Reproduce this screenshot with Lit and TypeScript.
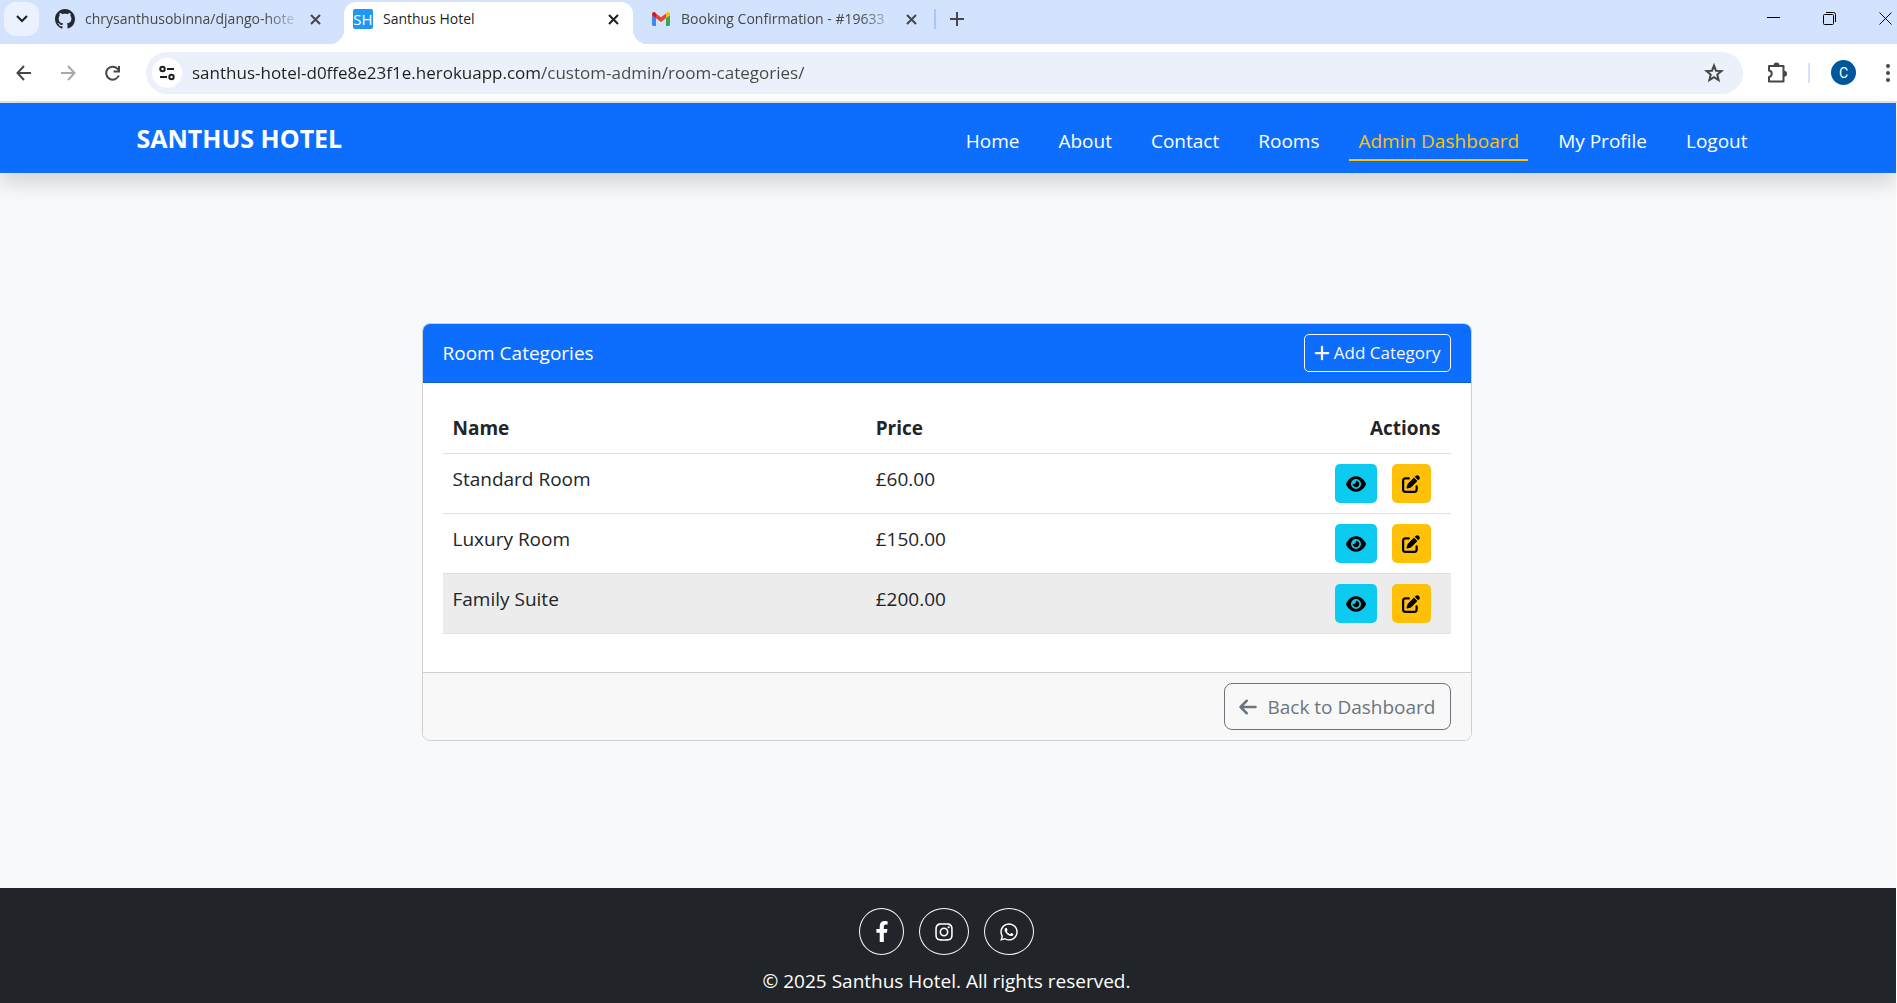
import { LitElement, html, css, svg } from "lit";
import { customElement, property, state } from "lit/decorators.js";
import { classMap } from "lit/directives/class-map.js";

const FONT = css`"Segoe UI", "Open Sans", "Noto Sans", sans-serif`;

const icon = (path: string, box: string, width: number, height: number) =>
  html`<svg viewBox=${box} width=${width} height=${height} fill="currentColor" aria-hidden="true"><path d=${path}></path></svg>`;

const line = (body: unknown, size: number, stroke = 2) =>
  html`<svg viewBox="0 0 ${size} ${size}" width=${size} height=${size} fill="none" stroke="currentColor"
    stroke-width=${stroke} aria-hidden="true">${body}</svg>`;

const EYE =
  "M288 32c-80.8 0-145.5 36.8-192.6 80.6C48.6 156 17.3 208 2.5 243.7c-3.3 7.9-3.3 16.7 0 24.6C17.3 304 48.6 356 95.4 399.4C142.5 443.2 207.2 480 288 480s145.5-36.8 192.6-80.6c46.8-43.5 78.1-95.4 93-131.1c3.3-7.9 3.3-16.7 0-24.6c-14.9-35.7-46.2-87.7-93-131.1C433.5 68.8 368.8 32 288 32zM144 256a144 144 0 1 1 288 0 144 144 0 1 1 -288 0zm144-64c0 35.3-28.7 64-64 64c-7.1 0-13.9-1.2-20.3-3.3c-5.5-1.8-11.9 1.6-11.7 7.4c.3 6.9 1.3 13.8 3.2 20.7c13.7 51.2 66.4 81.6 117.6 67.9s81.6-66.4 67.9-117.6c-11.1-41.5-47.8-69.4-88.6-71.1c-5.8-.2-9.2 6.1-7.4 11.7c2.1 6.4 3.3 13.2 3.3 20.3z";
const EDIT =
  "M471.6 21.7c-21.9-21.9-57.3-21.9-79.2 0L362.3 51.7l97.9 97.9 30.1-30.1c21.9-21.9 21.9-57.3 0-79.2L471.6 21.7zm-299.2 220c-6.1 6.1-10.8 13.6-13.5 21.9l-29.6 88.8c-2.9 8.6-.6 18.1 5.8 24.6s15.9 8.7 24.6 5.8l88.8-29.6c8.2-2.7 15.7-7.4 21.9-13.5L437.7 172.3 339.7 74.3 172.4 241.7zM96 64C43 64 0 107 0 160V416c0 53 43 96 96 96H352c53 0 96-43 96-96V320c0-17.7-14.3-32-32-32s-32 14.3-32 32v96c0 17.7-14.3 32-32 32H96c-17.7 0-32-14.3-32-32V160c0-17.7 14.3-32 32-32h96c17.7 0 32-14.3 32-32s-14.3-32-32-32H96z";
const PLUS =
  "M256 80c0-17.7-14.3-32-32-32s-32 14.3-32 32V224H48c-17.7 0-32 14.3-32 32s14.3 32 32 32H192V432c0 17.7 14.3 32 32 32s32-14.3 32-32V288H400c17.7 0 32-14.3 32-32s-14.3-32-32-32H256V80z";
const ARROW_LEFT =
  "M9.4 233.4c-12.5 12.5-12.5 32.8 0 45.3l160 160c12.5 12.5 32.8 12.5 45.3 0s12.5-32.8 0-45.3L109.2 288 416 288c17.7 0 32-14.3 32-32s-14.3-32-32-32l-306.7 0L214.6 118.6c12.5-12.5 12.5-32.8 0-45.3s-32.8-12.5-45.3 0l-160 160z";
const FACEBOOK =
  "M279.14 288l14.22-92.66h-88.91v-60.13c0-25.35 12.42-50.06 52.24-50.06h40.42V6.26S260.43 0 225.36 0c-73.22 0-121.08 44.38-121.08 124.72v70.62H22.89V288h81.39v224h100.17V288z";
const INSTAGRAM =
  "M224.1 141c-63.6 0-114.9 51.3-114.9 114.9s51.3 114.9 114.9 114.9S339 319.5 339 255.9 287.7 141 224.1 141zm0 189.6c-41.1 0-74.7-33.5-74.7-74.7s33.5-74.7 74.7-74.7 74.7 33.5 74.7 74.7-33.6 74.7-74.7 74.7zm146.4-194.3c0 14.9-12 26.8-26.8 26.8-14.9 0-26.8-12-26.8-26.8s12-26.8 26.8-26.8 26.8 12 26.8 26.8zm76.1 27.2c-1.7-35.9-9.9-67.7-36.2-93.9-26.2-26.2-58-34.4-93.9-36.2-37-2.1-147.9-2.1-184.9 0-35.8 1.7-67.6 9.9-93.9 36.1s-34.4 58-36.2 93.9c-2.1 37-2.1 147.9 0 184.9 1.7 35.9 9.9 67.7 36.2 93.9s58 34.4 93.9 36.2c37 2.1 147.9 2.1 184.9 0 35.9-1.7 67.7-9.9 93.9-36.2 26.2-26.2 34.4-58 36.2-93.9 2.1-37 2.1-147.8 0-184.8zM398.8 388c-7.8 19.6-22.9 34.7-42.6 42.6-29.5 11.7-99.5 9-132.1 9s-102.7 2.6-132.1-9c-19.6-7.8-34.7-22.9-42.6-42.6-11.7-29.5-9-99.5-9-132.1s-2.6-102.7 9-132.1c7.8-19.6 22.9-34.7 42.6-42.6 29.5-11.7 99.5-9 132.1-9s102.7-2.6 132.1 9c19.6 7.8 34.7 22.9 42.6 42.6 11.7 29.5 9 99.5 9 132.1s2.7 102.7-9 132.1z";
const WHATSAPP =
  "M380.9 97.1C339 55.1 283.2 32 223.9 32c-122.4 0-222 99.6-222 222 0 39.1 10.2 77.3 29.6 111L0 480l117.7-30.9c32.4 17.7 68.9 27 106.1 27h.1c122.3 0 224.1-99.6 224.1-222 0-59.3-25.2-115-67.1-157zm-157 341.6c-33.2 0-65.7-8.9-94-25.7l-6.7-4-69.8 18.3L72 359.2l-4.4-7c-18.5-29.4-28.2-63.3-28.2-98.2 0-101.7 82.8-184.5 184.6-184.5 49.3 0 95.6 19.2 130.4 54.1 34.8 34.9 56.2 81.2 56.1 130.5 0 101.8-84.9 184.6-186.6 184.6zm101.2-138.2c-5.5-2.8-32.8-16.2-37.9-18-5.1-1.9-8.8-2.8-12.5 2.8-3.7 5.6-14.3 18-17.6 21.8-3.2 3.7-6.5 4.2-12 1.4-32.6-16.3-54-29.1-75.5-66-5.7-9.8 5.7-9.1 16.3-30.3 1.8-3.7.9-6.9-.5-9.7-1.4-2.8-12.5-30.1-17.1-41.2-4.5-10.8-9.1-9.3-12.5-9.5-3.2-.2-6.9-.2-10.6-.2-3.7 0-9.7 1.4-14.8 6.9-5.1 5.6-19.4 19-19.4 46.3 0 27.3 19.9 53.7 22.6 57.4 2.8 3.7 39.1 59.7 94.8 83.8 35.2 15.2 49 16.5 66.6 13.9 10.7-1.6 32.8-13.4 37.4-26.4 4.6-13 4.6-24.1 3.2-26.4-1.3-2.5-5-3.9-10.5-6.6z";
const GITHUB =
  "M8 0C3.58 0 0 3.58 0 8c0 3.54 2.29 6.53 5.47 7.59.4.07.55-.17.55-.38 0-.19-.01-.82-.01-1.49-2.01.37-2.53-.49-2.69-.94-.09-.23-.48-.94-.82-1.13-.28-.15-.68-.52-.01-.53.63-.01 1.08.58 1.23.82.72 1.21 1.87.87 2.33.66.07-.52.28-.87.51-1.07-1.78-.2-3.64-.89-3.64-3.95 0-.87.31-1.59.82-2.15-.08-.2-.36-1.02.08-2.12 0 0 .67-.21 2.2.82.64-.18 1.32-.27 2-.27s1.36.09 2 .27c1.53-1.04 2.2-.82 2.2-.82.44 1.1.16 1.92.08 2.12.51.56.82 1.27.82 2.15 0 3.07-1.87 3.75-3.65 3.95.29.25.54.73.54 1.48 0 1.07-.01 1.93-.01 2.2 0 .21.15.46.55.38A8.01 8.01 0 0 0 16 8c0-4.42-3.58-8-8-8z";

const gmail = html`<svg viewBox="0 0 20 20" width="20" height="20" aria-hidden="true">
  <path fill="#4285f4" d="M1 6v9.6c0 .8.6 1.4 1.4 1.4H5V9z"></path>
  <path fill="#34a853" d="M15 17h2.6c.8 0 1.4-.6 1.4-1.4V6l-4 3z"></path>
  <path fill="#fbbc04" d="M15 4.6v4.6l4-3V5c0-1.7-1.900-2.600-3.200-1.600z"></path>
  <path fill="#ea4335" d="M5 9.200V4.400l5 3.800 5-3.800v4.800l-5 3.800z"></path>
  <path fill="#c5221f" d="M1 5v1.200l4 3V4.400l-.8-1C2.900 2.400 1 3.300 1 5z"></path>
</svg>`;

@customElement("browser-chrome")
export class BrowserChrome extends LitElement {
  @property() url = "";

  static styles = css`
    :host { display: block; font-family: ${FONT}; color: #474747; background: #fff; }
    svg { display: block; flex: none; }
    button {
      display: flex; align-items: center; justify-content: center;
      padding: 0; border: 0; background: none; color: inherit; font: inherit; cursor: pointer; flex: none;
    }
    .strip { display: flex; height: 44px; background: #d3e2fd; overflow: hidden; }
    .search { width: 35px; height: 34px; margin: 2px 7px 0 4px; border-radius: 12px; background: #ebf1fe; color: #1f1f1f; }
    .tabs { display: flex; gap: 9px; }
    .tab {
      display: flex; align-items: center; box-sizing: border-box; width: 289px; height: 42px;
      margin-top: 2px; padding: 0 10px 8px 9px; font-size: 14px; line-height: 20px;
    }
    .tab.active { position: relative; background: #fff; border-radius: 12px 12px 0 0; color: #1f1f1f; }
    .tab.active::before, .tab.active::after {
      content: ""; position: absolute; bottom: 0; width: 14px; height: 14px;
    }
    .tab.active::before { right: 100%; background: radial-gradient(circle at 0 0, transparent 14px, #fff 14px); }
    .tab.active::after { left: 100%; background: radial-gradient(circle at 100% 0, transparent 14px, #fff 14px); }
    .title { flex: 1; min-width: 0; margin: 0 10px; white-space: nowrap; }
    .fade { -webkit-mask-image: linear-gradient(90deg, #000 180px, transparent 216px); mask-image: linear-gradient(90deg, #000 180px, transparent 216px); }
    .close { width: 20px; height: 20px; }
    .badge {
      width: 20px; height: 20px; border-radius: 2px; background: #2196f3; color: #fff;
      font-size: 15px; line-height: 20px; text-align: center; flex: none;
    }
    .github { color: #24292f; }
    .rule { width: 2px; height: 20px; background: #a8c7fa; margin: 9px 8px 0 3px; }
    .plus { width: 26px; height: 38px; }
    .window { display: flex; margin: 0 -16px 0 auto; color: #000; }
    .window button { width: 56px; height: 36px; }
    .bar { display: flex; align-items: center; height: 57px; box-sizing: border-box; padding: 0 3px 0 2px; }
    .nav { width: 44px; height: 40px; }
    .nav.off { color: #a9a9a9; }
    .address {
      flex: 1; display: flex; align-items: center; height: 42px; margin: 0 0 0 12px;
      border-radius: 21px; background: #ebf0fa; padding: 0 19px 0 6px;
    }
    .site { width: 30px; height: 30px; border-radius: 50%; background: #fff; color: #1f1f1f; }
    input {
      flex: 1; min-width: 0; height: 30px; margin: 0 10px; padding: 0; border: 0; outline: 0;
      font-family: inherit; font-size: 17px; color: transparent;
      background: linear-gradient(90deg, #1f1f1f 350px, #474747 350px); -webkit-background-clip: text; background-clip: text;
    }
    .ext { width: 40px; height: 40px; margin-left: 14px; }
    .split { width: 2px; height: 20px; margin: 0 21px 0 11px; background: #d3e2fd; }
    .avatar { width: 25px; height: 25px; border-radius: 50%; background: #00579b; color: #fff; font-family: Roboto, sans-serif; font-size: 14px; }
    .more { width: 12px; height: 40px; margin-left: 26px; }
    .edge { height: 2px; background: #dfe3e1; }
  `;

  private close() {
    return html`<button class="close" aria-label="Close tab">
      ${line(svg`<path d="M1 1l9 9M10 1l-9 9"></path>`, 11, 2)}
    </button>`;
  }

  render() {
    return html`
      <div class="strip">
        <button class="search" aria-label="Search tabs">${line(svg`<path d="M1 3l5 5 5-5"></path>`, 12, 2)}</button>
        <div class="tabs">
          <div class="tab">
            <span class="github">${icon(GITHUB, "0 0 16 16", 20, 20)}</span>
            <span class="title fade">chrysanthusobinna/django-hote</span>${this.close()}
          </div>
          <div class="tab active">
            <span class="badge">SH</span><span class="title">Santhus Hotel</span>${this.close()}
          </div>
          <div class="tab">
            ${gmail}<span class="title fade">Booking Confirmation - #19633</span>${this.close()}
          </div>
        </div>
        <span class="rule"></span>
        <button class="plus" aria-label="New tab">${line(svg`<path d="M7 0v14M0 7h14"></path>`, 14, 2)}</button>
        <div class="window">
          <button aria-label="Minimize">${line(svg`<path d="M0 5.500h13"></path>`, 13, 1)}</button>
          <button aria-label="Restore">
            ${line(svg`<rect x=".5" y="2.500" width="10" height="10" rx="1"></rect><path d="M3 .5h7.500a2 2 0 0 1 2 2V10"></path>`, 13, 1)}
          </button>
          <button aria-label="Close">${line(svg`<path d="M.5 .5l12 12M12.500 .5l-12 12"></path>`, 13, 1)}</button>
        </div>
      </div>
      <div class="bar">
        <button class="nav" aria-label="Back">${line(svg`<path d="M15 8H2M8 1L1.500 8 8 15"></path>`, 16, 2)}</button>
        <button class="nav off" aria-label="Forward">${line(svg`<path d="M1 8h13M8 1l6.500 7L8 15"></path>`, 16, 2)}</button>
        <button class="nav" aria-label="Reload">
          ${line(svg`<path d="M14.800 10.500A6.500 6.500 0 1 1 13.400 3.600L15 5.500"></path><path d="M15 1v5.500H9.500"></path>`, 16, 2)}
        </button>
        <div class="address">
          <button class="site" aria-label="View site information">
            ${line(svg`<circle cx="3.500" cy="4" r="2.200"></circle><path d="M8 4h7M1 12h7"></path><circle cx="12.500" cy="12" r="2.200"></circle>`, 16, 2)}
          </button>
          <input aria-label="Address" .value=${this.url} />
          <button aria-label="Bookmark this tab">
            ${line(svg`<path d="M10 2.600l2 5.100 5.500.4-4.200 3.500 1.300 5.400L10 14.100 5.400 17l1.300-5.400L2.500 8.100l5.500-.4z"></path>`, 20, 2)}
          </button>
        </div>
        <button class="ext" aria-label="Extensions">
          <svg viewBox="0 0 22 22" width="22" height="22" aria-hidden="true">
            <path d="M3 4h14.500v15.500H3v-4.500a3.300 3.300 0 0 0 0-6.500z" fill="none" stroke="currentColor" stroke-width="2" stroke-linejoin="round"></path>
            <path d="M7.500 3.500a3 3 0 0 1 6 0zM18 8.800a3 3 0 0 1 0 6z" fill="currentColor"></path>
          </svg>
        </button>
        <span class="split"></span>
        <button class="avatar" aria-label="Profile">C</button>
        <button class="more" aria-label="Menu">
          <svg viewBox="0 0 4 18" width="4" height="18" fill="currentColor" aria-hidden="true">
            <circle cx="2" cy="2" r="2"></circle><circle cx="2" cy="9" r="2"></circle><circle cx="2" cy="16" r="2"></circle>
          </svg>
        </button>
      </div>
      <div class="edge"></div>
    `;
  }
}

interface Category { name: string; price: string; }

@customElement("category-card")
export class CategoryCard extends LitElement {
  @property({ attribute: false }) rows: Category[] = [];
  @state() private current = 2;

  static styles = css`
    :host { display: block; font-family: ${FONT}; font-size: 19px; line-height: 30px; color: #212529; }
    svg { display: block; flex: none; }
    .card { border: 1px solid #cdcfd1; border-radius: 8px; background: #fff; overflow: hidden; }
    header {
      display: flex; align-items: center; justify-content: space-between;
      padding: 10px 20px; background: #0d6efd; color: #fff; border-bottom: 1px solid #0b5ed7;
    }
    h1 { margin: 0; font: inherit; }
    a { text-decoration: none; color: inherit; display: inline-flex; align-items: center; box-sizing: border-box; }
    .add { height: 38px; padding: 0 9px; gap: 4px; border: 1px solid #f8f9fa; border-radius: 5px; color: #f8f9fa; font-size: 17px; }
    .body { padding: 20px 20px 38px; }
    table { width: 100%; border-collapse: separate; border-spacing: 0; table-layout: fixed; }
    th, td { padding: 10px; border-bottom: 1px solid #dee2e6; vertical-align: top; text-align: left; }
    th { font-weight: 700; font-size: 19px; }
    .name { width: 40%; }
    .last { text-align: right; }
    .actions { display: flex; justify-content: flex-end; gap: 15px; padding-right: 10px; }
    .active td { background: #ececec; }
    .action { height: 39px; justify-content: center; border-radius: 5px; color: #000; }
    .view { width: 42px; background: #0dcaf0; }
    .edit { width: 39px; background: #ffc107; }
    footer { display: flex; justify-content: flex-end; padding: 10px 20px; background: #f8f8f8; border-top: 1px solid #cdcfd1; }
    .back { height: 47px; padding: 0 14px; gap: 10px; border: 1px solid #6c757d; border-radius: 8px; color: #6c757d; }
  `;

  render() {
    return html`
      <section class="card">
        <header>
          <h1>Room Categories</h1>
          <a class="add" href="#add">${icon(PLUS, "0 0 448 512", 16, 18)}Add Category</a>
        </header>
        <div class="body">
          <table>
            <thead>
              <tr><th class="name">Name</th><th>Price</th><th class="last">Actions</th></tr>
            </thead>
            <tbody>
              ${this.rows.map(
                (row, i) => html`
                  <tr class=${classMap({ active: i === this.current })} @mouseenter=${() => (this.current = i)}>
                    <td>${row.name}</td>
                    <td>${row.price}</td>
                    <td>
                      <div class="actions">
                        <a class="action view" href="#view" aria-label="View ${row.name}">${icon(EYE, "0 0 576 512", 20, 18)}</a>
                        <a class="action edit" href="#edit" aria-label="Edit ${row.name}">${icon(EDIT, "0 0 512 512", 18, 18)}</a>
                      </div>
                    </td>
                  </tr>
                `
              )}
            </tbody>
          </table>
        </div>
        <footer>
          <a class="back" href="#dashboard">${icon(ARROW_LEFT, "0 0 448 512", 18, 20)}Back to Dashboard</a>
        </footer>
      </section>
    `;
  }
}

@customElement("app-root")
export class AppRoot extends LitElement {
  private links = ["Home", "About", "Contact", "Rooms", "Admin Dashboard", "My Profile", "Logout"];
  private rows: Category[] = [
    { name: "Standard Room", price: "£60.00" },
    { name: "Luxury Room", price: "£150.00" },
    { name: "Family Suite", price: "£200.00" },
  ];

  static styles = css`
    :host {
      display: flex; flex-direction: column; min-height: 100vh; background: #fff;
      font-family: ${FONT}; font-size: 19px; line-height: 30px;
    }
    svg { display: block; }
    a { text-decoration: none; color: inherit; }
    .page { flex: 1; display: flex; flex-direction: column; margin-right: 1px; background: #f8f9fa; }
    .navbar { padding-right: 3px; background: #0d6efd; color: #fff; box-shadow: 0 10px 20px rgba(0, 0, 0, 0.15); }
    .container {
      display: flex; align-items: center; justify-content: space-between; box-sizing: border-box;
      height: 70px; max-width: 1650px; margin: 0 auto; padding: 0 15px;
    }
    .brand { font-size: 25px; font-weight: 700; }
    .links { display: flex; gap: 21px; }
    .link { padding: 11px 9px 3px; border-bottom: 2px solid transparent; }
    .link.on { color: #ffc107; border-color: #ffc107; }
    main { flex: 1; display: flex; align-items: center; justify-content: center; padding: 3px 3px 0 0; }
    category-card { flex: 0 1 1050px; }
    footer { padding: 20px 3px 7px 0; background: #212529; color: #fff; text-align: center; }
    .social { display: flex; justify-content: center; gap: 15px; margin-bottom: 11px; }
    .social a {
      display: flex; align-items: center; justify-content: center; box-sizing: border-box;
      width: 50px; height: 47px; border: 1px solid #f8f9fa; border-radius: 50%;
    }
    .social .narrow { width: 45px; }
  `;

  render() {
    return html`
      <browser-chrome url="santhus-hotel-d0ffe8e23f1e.herokuapp.com/custom-admin/room-categories/"></browser-chrome>
      <div class="page">
        <nav class="navbar">
          <div class="container">
            <a class="brand" href="#home">SANTHUS HOTEL</a>
            <div class="links">
              ${this.links.map(
                (label) => html`<a class=${classMap({ link: true, on: label === "Admin Dashboard" })} href="#">${label}</a>`
              )}
            </div>
          </div>
        </nav>
        <main><category-card .rows=${this.rows}></category-card></main>
        <footer>
          <div class="social">
            <a class="narrow" href="#facebook" aria-label="Facebook">${icon(FACEBOOK, "0 0 320 512", 14, 21)}</a>
            <a href="#instagram" aria-label="Instagram">${icon(INSTAGRAM, "0 0 448 512", 18, 20)}</a>
            <a href="#whatsapp" aria-label="WhatsApp">${icon(WHATSAPP, "0 0 448 512", 18, 20)}</a>
          </div>
          <div>© 2025 Santhus Hotel. All rights reserved.</div>
        </footer>
      </div>
    `;
  }
}
